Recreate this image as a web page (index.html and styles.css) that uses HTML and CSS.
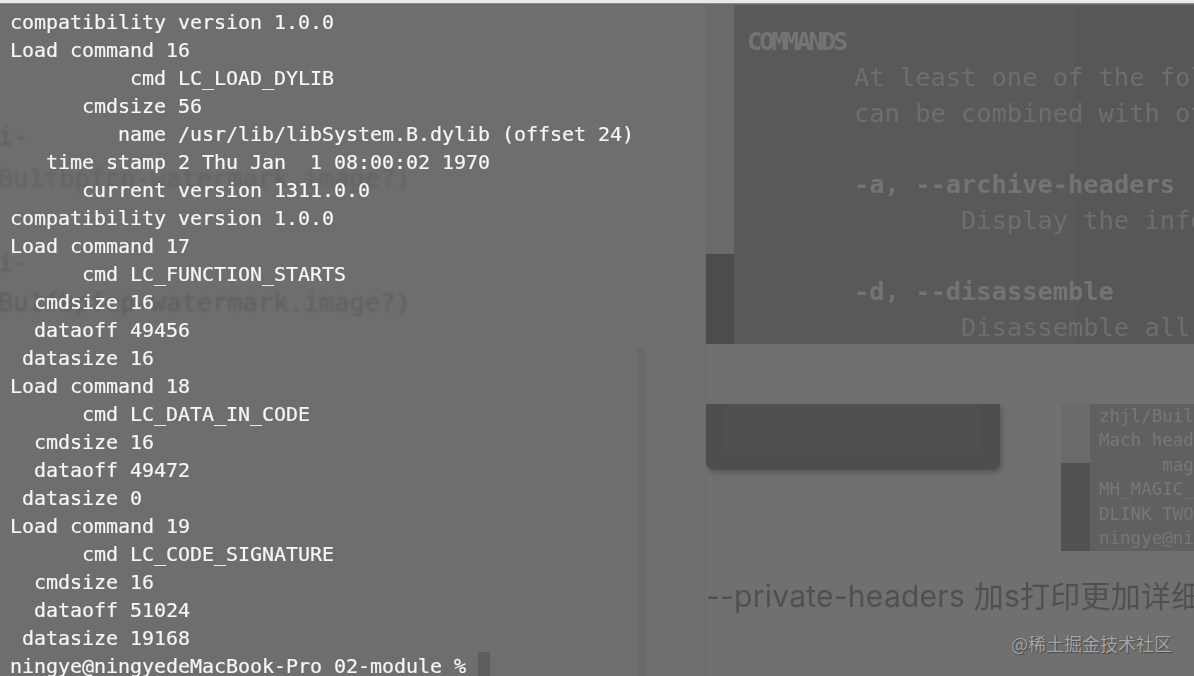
FILE: index.html
```html
<!DOCTYPE html>
<html lang="en">
<head>
<meta charset="utf-8">
<title>otool output</title>
<link rel="stylesheet" href="styles.css">
</head>
<body>
<div class="topstrip"></div>
<main class="page">
  <section class="left">
    <div class="ghost ghost-a">i-</div>
    <div class="ghost ghost-b">Bu1fbpfcp-watermark.image?)</div>
    <div class="ghost ghost-c">i-</div>
    <div class="ghost ghost-d">Bu1fbpfcp-watermark.image?)</div>
    <pre class="terminal">compatibility version 1.0.0
Load command 16
          cmd LC_LOAD_DYLIB
      cmdsize 56
         name /usr/lib/libSystem.B.dylib (offset 24)
   time stamp 2 Thu Jan  1 08:00:02 1970
      current version 1311.0.0
compatibility version 1.0.0
Load command 17
      cmd LC_FUNCTION_STARTS
  cmdsize 16
  dataoff 49456
 datasize 16
Load command 18
      cmd LC_DATA_IN_CODE
  cmdsize 16
  dataoff 49472
 datasize 0
Load command 19
      cmd LC_CODE_SIGNATURE
  cmdsize 16
  dataoff 51024
 datasize 19168
ningye@ningyedeMacBook-Pro 02-module % <span class="cursor"> </span></pre>
    <div class="track"></div>
  </section>
  <section class="right">
    <div class="shot shot-man">
      <div class="rail"><div class="rail-up"></div><div class="rail-down"></div></div>
      <pre class="man"><b class="man-title">COMMANDS</b>
       At least one of the following
       can be combined with other

       <b>-a, --archive-headers</b>
              Display the information

       <b>-d, --disassemble</b>
              Disassemble all</pre>
    </div>
    <div class="shots">
      <div class="shot-blank"><div class="blank-inner"></div></div>
      <div class="shot-term">
        <div class="rail rail-small"><div class="rail-up"></div><div class="rail-down"></div></div>
        <pre class="mini">zhjl/Build
Mach header
      magic
MH_MAGIC_64
DLINK TWOLEVEL
ningye@ningye</pre>
      </div>
    </div>
    <h2 class="caption">--private-headers 加s打印更加详细的信息</h2>
  </section>
</main>
<div class="mark">@稀土掘金技术社区</div>
</body>
</html>
```
FILE: styles.css
```css
* { box-sizing: border-box; }
html, body { margin: 0; height: 100%; overflow: hidden; }
body {
  background: #6e6e6e;
  display: flex;
  flex-direction: column;
  position: relative;
}
.topstrip {
  height: 5px;
  flex: none;
  background: linear-gradient(#e9e9e9 0 3px, #8a8a8a 3px 4px, #6a6a6a 4px);
}
.page {
  flex: 1;
  min-height: 0;
  display: grid;
  grid-template-columns: 706px 488px;
}
.left {
  position: relative;
  display: flex;
  overflow: hidden;
  background: #6e6e6e;
}
.terminal {
  position: relative;
  flex: 1;
  margin: 0;
  padding: 3px 0 0 10px;
  font: 20px/28px "DejaVu Sans Mono", monospace;
  letter-spacing: -0.04px;
  color: #f6f6f6;
  -webkit-text-stroke: 0.2px #f6f6f6;
  filter: blur(0.35px);
}
.cursor { background: #5d5d5d; display: inline-block; width: 12px; height: 28px; vertical-align: top; }
.track {
  width: 8px;
  margin: 343px 60px 0 0;
  background: #696969;
}
.ghost {
  position: absolute;
  left: -2px;
  font: 25.4px/30px "DejaVu Sans Mono", monospace;
  color: #645c60;
  white-space: nowrap;
  filter: blur(0.8px);
}
.ghost-a { top: 116px; }
.ghost-b { top: 158px; color: #676164; }
.ghost-c { top: 242px; }
.ghost-d { top: 282px; }
.right { min-width: 0; overflow: hidden; background: #707070; }
.shot-man {
  height: 339px;
  display: flex;
  overflow: hidden;
  background: linear-gradient(90deg, #595959 0 370px, #575757 370px);
}
.rail { width: 28px; flex: none; display: flex; flex-direction: column; }
.rail-up { height: 249px; background: #6a6a6a; }
.rail-down { flex: 1; background: #4c4c4c; }
.man {
  margin: 0;
  padding: 19px 0 0 13px;
  font: 25.4px/35.75px "DejaVu Sans Mono", monospace;
  color: #6e6e6e;
  filter: blur(0.6px);
}
.man b { font-weight: 700; color: #747474; }
.man-title { letter-spacing: -3px; }
.shots {
  margin-top: 60px;
  display: flex;
  justify-content: space-between;
  align-items: flex-start;
}
.shot-blank {
  width: 294px;
  height: 66px;
  padding: 0 18px 20px;
  background: #4e4e4e;
  border-radius: 0 0 8px 8px;
  box-shadow: 2px 3px 5px rgba(70, 70, 70, .5);
}
.blank-inner { height: 100%; background: #505050; }
.shot-term {
  width: 133px;
  height: 147px;
  display: flex;
  overflow: hidden;
  background: #606060;
}
.rail-small { width: 29px; }
.rail-small .rail-up { height: 59px; background: #6b6b6b; }
.rail-small .rail-down { background: #515151; }
.mini {
  margin: 0;
  padding: 0 0 0 9px;
  font: 17.5px/24.4px "DejaVu Sans Mono", monospace;
  color: #777;
  filter: blur(0.5px);
}
.caption {
  margin: 25px 0 0;
  font: 400 30px/40px Inter, "Noto Sans CJK SC", sans-serif;
  letter-spacing: 0.25px;
  color: #505050;
  white-space: nowrap;
  filter: blur(0.4px);
}
.mark {
  position: absolute;
  right: 22px;
  top: 632px;
  font: 18px/22px "Noto Sans CJK SC", sans-serif;
  color: #a6a6a6;
  text-shadow: 0 0 1px #4a4a4a, 1px 1px 1px #4a4a4a;
  white-space: nowrap;
}
```
